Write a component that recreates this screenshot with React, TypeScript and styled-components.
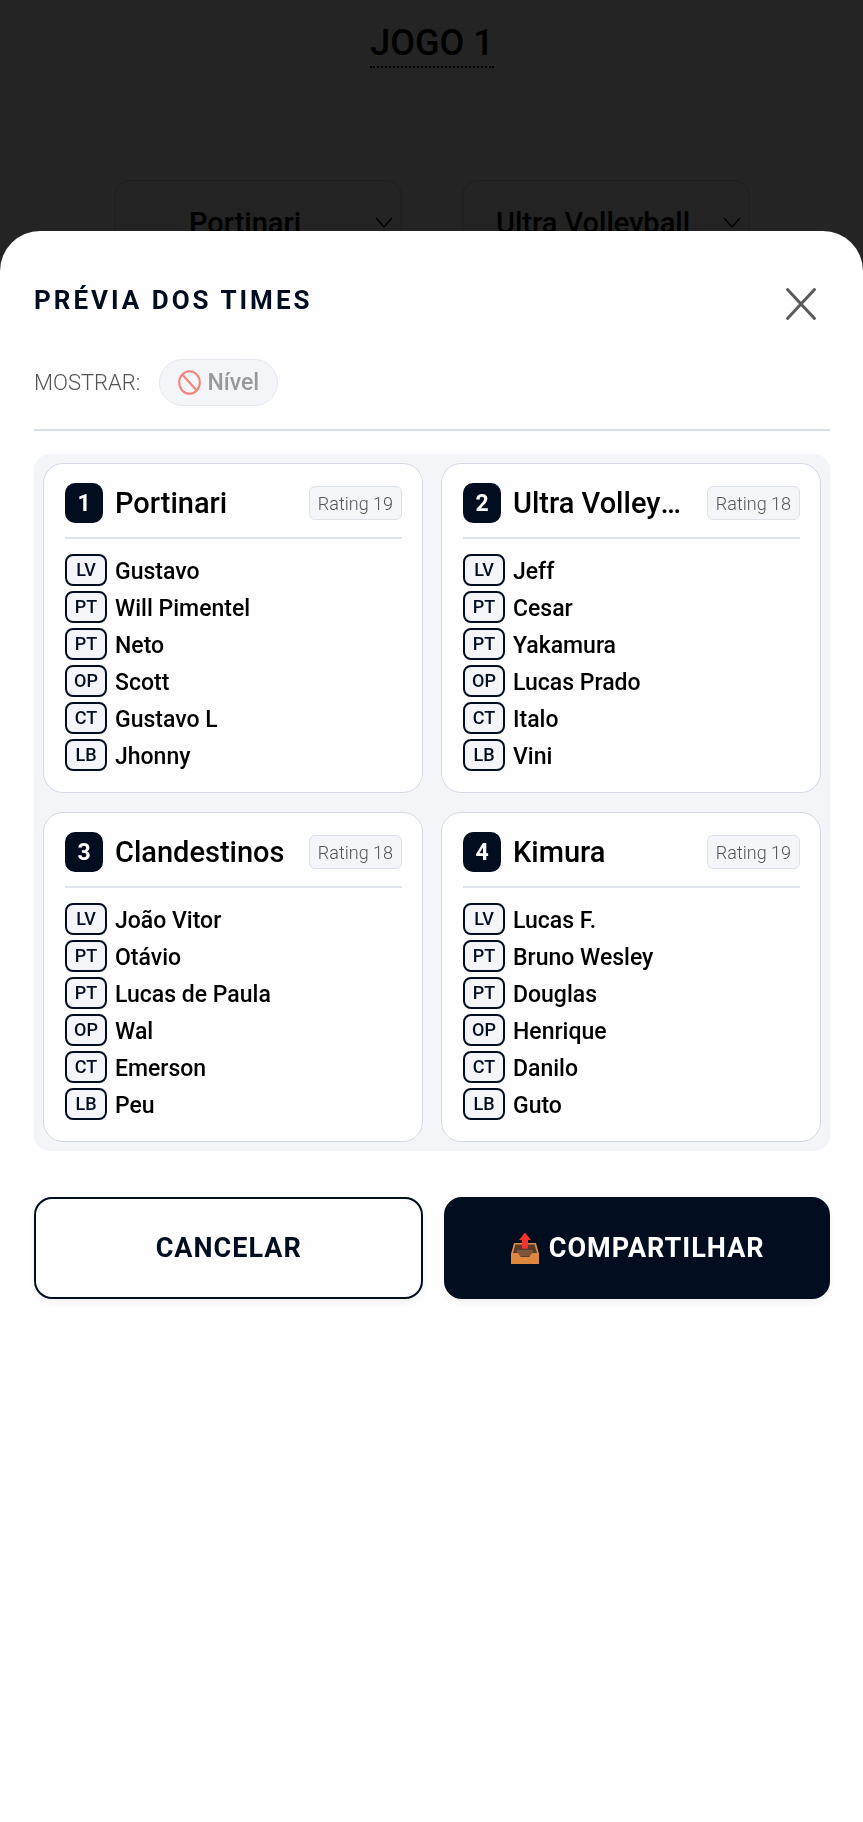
import React, { useState } from "react";
import styled, { createGlobalStyle } from "styled-components";

const GlobalStyle = createGlobalStyle`
  * { box-sizing: border-box; }
  body {
    margin: 0;
    background: #fafafa;
    color: #000;
    font-family: Roboto, "Open Sans", sans-serif;
  }
  h1, h2, h3, ul { margin: 0; padding: 0; }
  button, select { font-family: inherit; }
`;

const navy = "#020e1f";
const line = "#d8dfe9";
const tint = "#f3f5f9";

const Page = styled.main`
  min-height: 100vh;
  padding: 20px 113px 16px 114px;
  display: flex;
  flex-direction: column;
  align-items: center;
`;

const GameTitle = styled.h1`
  border-bottom: 2px dotted #000;
  font-size: 36px;
  line-height: 46px;
  font-weight: 500;
`;

const Matchup = styled.div`
  width: 100%;
  margin-top: 112px;
  display: grid;
  grid-template-columns: 1fr 1fr;
  gap: 60px;
`;

const TeamPicker = styled.label`
  height: 86px;
  padding: 0 8px 0 0;
  display: flex;
  align-items: center;
  border: 1px solid #d0d0d0;
  border-radius: 16px;
  background: #f4f4f4;
`;

const TeamSelect = styled.select`
  flex: 1;
  min-width: 0;
  appearance: none;
  border: 0;
  background: transparent;
  color: #000;
  font-size: 29px;
  font-weight: 500;
  text-align: center;
  text-align-last: center;
`;

const Backdrop = styled.div`
  position: fixed;
  inset: 0;
  padding-top: 231px;
  display: flex;
  background: rgba(0, 0, 0, 0.86);
`;

const Sheet = styled.section`
  flex: 1;
  min-width: 0;
  padding: 40px 33px 40px 34px;
  overflow: auto;
  border-radius: 40px 40px 0 0;
  background: #fefefe;
`;

const SheetHeader = styled.header`
  height: 65px;
  display: flex;
  align-items: flex-start;
  justify-content: space-between;
`;

const SheetTitle = styled.h2`
  color: ${navy};
  font-size: 26px;
  line-height: 58px;
  font-weight: 700;
  letter-spacing: 3px;
`;

const CloseButton = styled.button`
  width: 58px;
  height: 66px;
  padding: 0;
  display: grid;
  place-items: center;
  border: 0;
  background: none;
  cursor: pointer;
`;

const FilterBar = styled.div`
  padding: 23px 0;
  display: flex;
  align-items: center;
  gap: 19px;
  border-bottom: 2px solid ${line};
`;

const FilterLabel = styled.span`
  color: #555;
  font-size: 22px;
  font-weight: 300;
`;

const FilterPill = styled.button`
  height: 47px;
  padding: 0 18px;
  display: flex;
  align-items: center;
  gap: 6px;
  border: 1px solid #e6e8ef;
  border-radius: 24px;
  background: ${tint};
  color: #97999d;
  font-size: 23px;
  font-weight: 500;
  cursor: pointer;
`;

const Teams = styled.div`
  margin-top: 23px;
  padding: 9px;
  display: grid;
  grid-template-columns: 1fr 1fr;
  gap: 19px 18px;
  border-radius: 16px;
  background: ${tint};
`;

const Card = styled.article`
  min-width: 0;
  padding: 19px 20px 21px 21px;
  border: 1px solid #d3d9e4;
  border-radius: 20px;
  background: #fefefe;
`;

const CardHeader = styled.header`
  padding-bottom: 14px;
  display: flex;
  align-items: center;
  gap: 12px;
  border-bottom: 2px solid #dfe3ec;
`;

const TeamNumber = styled.span`
  flex: none;
  width: 38px;
  height: 40px;
  display: grid;
  place-items: center;
  border-radius: 10px;
  background: ${navy};
  color: #fff;
  font-size: 23px;
  font-weight: 700;
`;

const TeamName = styled.h3`
  flex: 1;
  min-width: 0;
  overflow: hidden;
  font-size: 29px;
  line-height: 40px;
  font-weight: 500;
  text-overflow: ellipsis;
  white-space: nowrap;
`;

const Rating = styled.span`
  flex: none;
  height: 34px;
  margin-left: 8px;
  padding: 0 8px;
  display: flex;
  align-items: center;
  border: 1px solid #dde1ea;
  border-radius: 6px;
  background: ${tint};
  color: #555;
  font-size: 18px;
  font-weight: 300;
`;

const Roster = styled.ul`
  margin-top: 15px;
  display: flex;
  flex-direction: column;
  gap: 5px;
  list-style: none;
`;

const Player = styled.li`
  display: flex;
  align-items: center;
  gap: 8px;
`;

const PlayerName = styled.span`
  padding-top: 4px;
  font-size: 23px;
  line-height: 28px;
  font-weight: 500;
`;

const Position = styled.span`
  width: 42px;
  height: 32px;
  display: grid;
  place-items: center;
  border: 2px solid ${navy};
  border-radius: 8px;
  background: ${tint};
  color: ${navy};
  font-size: 18px;
  line-height: 28px;
  font-weight: 500;
`;

const Actions = styled.div`
  margin-top: 46px;
  display: grid;
  grid-template-columns: 101fr 100fr;
  gap: 21px;
`;

const ActionButton = styled.button<{ $primary?: boolean }>`
  height: 102px;
  display: flex;
  align-items: center;
  justify-content: center;
  gap: 9px;
  border: 2px solid ${navy};
  border-radius: 18px;
  background: ${(p) => (p.$primary ? navy : "#fefefe")};
  color: ${(p) => (p.$primary ? "#fff" : navy)};
  box-shadow: 0 4px 6px rgba(2, 13, 30, 0.05);
  font-size: 27px;
  font-weight: 700;
  letter-spacing: 1px;
  cursor: pointer;
`;

const Chevron = () => (
  <svg width="18" height="12" viewBox="0 0 18 12" fill="none" stroke="#000" strokeWidth="1.400" aria-hidden="true">
    <path d="M1 1 9 10 17 1" />
  </svg>
);

const CloseIcon = () => (
  <svg width="32" height="34" viewBox="0 0 32 34" fill="none" stroke="#5a5a5a" strokeWidth="3" strokeLinecap="round" aria-hidden="true">
    <path d="M2.500 2.500 29.500 31.500M29.500 2.500 2.500 31.500" />
  </svg>
);

const BlockedIcon = () => (
  <svg width="23" height="25" viewBox="0 0 23 25" fill="none" stroke="#f98078" strokeWidth="2" aria-hidden="true">
    <ellipse cx="11.500" cy="12.500" rx="10.300" ry="11.300" />
    <path d="M4.300 4.500 18.700 20.500" />
  </svg>
);

const OutboxIcon = () => (
  <svg width="30" height="33" viewBox="0 0 30 33" aria-hidden="true">
    <path d="M4 11h22l3 11v9.500H1V22z" fill="#d98a4e" />
    <path d="M5.500 12.500h19L27 21h-5l-2.500 4h-9L8 21H3z" fill="#5b3a2a" />
    <path d="M7 18h16v3l-3 3H10l-3-3z" fill="#80543b" />
    <path d="M1 21.500h7.500l2 3.500h9l2-3.500H29V32H1z" fill="#e0873f" />
    <path d="M15 0.500 21 8h-3v8.500h-6V8H9z" fill="#f5322c" />
  </svg>
);

const codes = ["LV", "PT", "PT", "OP", "CT", "LB"];

const teams = [
  { name: "Portinari", rating: 19, players: ["Gustavo", "Will Pimentel", "Neto", "Scott", "Gustavo L", "Jhonny"] },
  { name: "Ultra Volleyball", rating: 18, players: ["Jeff", "Cesar", "Yakamura", "Lucas Prado", "Italo", "Vini"] },
  { name: "Clandestinos", rating: 18, players: ["João Vitor", "Otávio", "Lucas de Paula", "Wal", "Emerson", "Peu"] },
  { name: "Kimura", rating: 19, players: ["Lucas F.", "Bruno Wesley", "Douglas", "Henrique", "Danilo", "Guto"] },
];

const Picker = ({ initial, label }: { initial: string; label: string }) => {
  const [value, setValue] = useState(initial);
  return (
    <TeamPicker>
      <TeamSelect aria-label={label} value={value} onChange={(e) => setValue(e.target.value)}>
        {teams.map((t) => (
          <option key={t.name}>{t.name}</option>
        ))}
      </TeamSelect>
      <Chevron />
    </TeamPicker>
  );
};

export default function App() {
  return (
    <>
      <GlobalStyle />
      <Page>
        <GameTitle>JOGO 1</GameTitle>
        <Matchup>
          <Picker initial="Portinari" label="Time A" />
          <Picker initial="Ultra Volleyball" label="Time B" />
        </Matchup>
      </Page>
      <Backdrop>
        <Sheet role="dialog" aria-modal="true" aria-labelledby="preview-title">
          <SheetHeader>
            <SheetTitle id="preview-title">PRÉVIA DOS TIMES</SheetTitle>
            <CloseButton type="button" aria-label="Fechar">
              <CloseIcon />
            </CloseButton>
          </SheetHeader>
          <FilterBar>
            <FilterLabel>MOSTRAR:</FilterLabel>
            <FilterPill type="button">
              <BlockedIcon />
              Nível
            </FilterPill>
          </FilterBar>
          <Teams>
            {teams.map((team, i) => (
              <Card key={team.name}>
                <CardHeader>
                  <TeamNumber>{i + 1}</TeamNumber>
                  <TeamName>{team.name}</TeamName>
                  <Rating>Rating {team.rating}</Rating>
                </CardHeader>
                <Roster>
                  {team.players.map((player, j) => (
                    <Player key={player}>
                      <Position>{codes[j]}</Position>
                      <PlayerName>{player}</PlayerName>
                    </Player>
                  ))}
                </Roster>
              </Card>
            ))}
          </Teams>
          <Actions>
            <ActionButton type="button">CANCELAR</ActionButton>
            <ActionButton type="button" $primary>
              <OutboxIcon />
              COMPARTILHAR
            </ActionButton>
          </Actions>
        </Sheet>
      </Backdrop>
    </>
  );
}
